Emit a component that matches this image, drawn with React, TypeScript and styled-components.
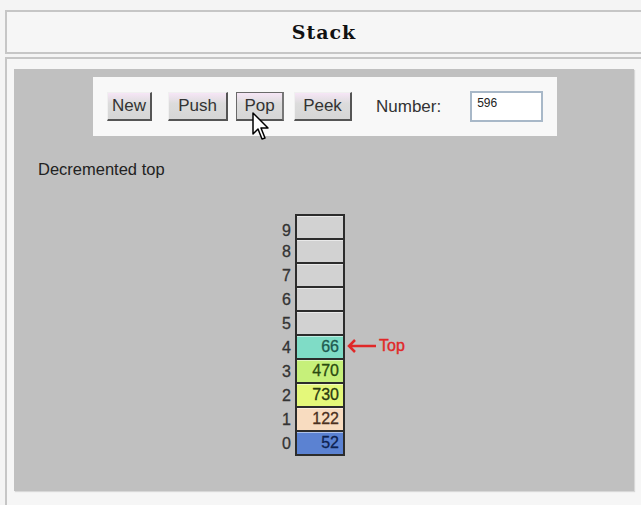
import styled, { createGlobalStyle } from 'styled-components'

const GlobalStyle = createGlobalStyle`
    html, body {
        margin: 0;
        padding: 0;
        background: #f4f4f4;
    }
    body {
        font-family: "Liberation Sans", Arial, sans-serif;
    }
`

const Page = styled.div`
    width: 641px;
    height: 505px;
    box-sizing: border-box;
    overflow: hidden;
    padding: 10px 0 0 5px;
`

const TitleBar = styled.div`
    height: 40px;
    border: 2px solid #c6c6c6;
    border-right: none;
    display: flex;
    align-items: center;
    justify-content: center;
    background: #f6f6f6;
`

const Title = styled.h1`
    margin: 0;
    font-family: "DejaVu Serif", "Liberation Serif", serif;
    font-size: 19px;
    font-weight: bold;
    letter-spacing: 1px;
    color: #111;
`

const MainPanel = styled.div`
    margin-top: 3px;
    border: 2px solid #c6c6c6;
    border-right: none;
    border-bottom: none;
    padding: 10px 0 0 7px;
    height: 446px;
    background: #f6f6f6;
`

const Canvas = styled.div`
    position: relative;
    width: 620px;
    height: 422px;
    padding-top: 8px;
    box-sizing: border-box;
    background: #c0c0c0;
    box-shadow: 1px 1px 1px #d8d8d8;
    display: flow-root;
`

const Toolbar = styled.div`
    margin-left: 79px;
    width: 464px;
    height: 59px;
    background: #f8f8f8;
    display: flex;
    align-items: center;
    padding-left: 14px;
    box-sizing: border-box;
`

const Button = styled.button<{ $pressed?: boolean, $width: number, $gap: number }>`
    width: ${({ $width }) => $width}px;
    height: 29px;
    margin-right: ${({ $gap }) => $gap}px;
    padding: 0;
    font-family: "Liberation Sans", Arial, sans-serif;
    font-size: 17px;
    color: #333;
    background: linear-gradient(#f6e6f6, #dcdcdc 40%, #d6d6d6);
    border: 2px solid;
    border-color: ${({ $pressed }) => ($pressed ? '#6a6a6a #777 #555 #6a6a6a' : '#f0f0f0 #555 #555 #f0f0f0')};
    border-top-width: 1px;
    border-left-width: 1px;
`

const Label = styled.span`
    margin-left: 14px;
    font-size: 17px;
    color: #333;
`

const NumberBox = styled.div`
    margin-left: 29px;
    width: 73px;
    height: 31px;
    box-sizing: border-box;
    border: 2px solid #a8b8c8;
    background: #fff;
    font-size: 12px;
    color: #222;
    padding: 3px 0 0 5px;
`

const Message = styled.p`
    margin: 24px 0 0 24px;
    font-size: 16.5px;
    color: #222;
`

const StackArea = styled.div`
    position: relative;
    margin: 35px 0 0 262px;
    width: 160px;
`

const Row = styled.div`
    display: flex;
    align-items: center;
    height: 24px;
    &:first-child {
        height: 26px;
        align-items: flex-end;
    }
`

const Index = styled.span`
    width: 15px;
    padding-right: 4px;
    text-align: right;
    font-size: 16px;
    color: #333;
    -webkit-text-stroke: 0.3px #333;
`

const Cell = styled.div<{ $fill: string, $ink: string, $first?: boolean }>`
    width: 50px;
    height: ${({ $first }) => ($first ? '26px' : '24px')};
    box-sizing: border-box;
    border: 2px solid #2c2c2c;
    border-top: ${({ $first }) => ($first ? '2px solid #2c2c2c' : 'none')};
    background: ${({ $fill }) => $fill};
    box-shadow: inset 0 1px 0 rgba(255, 255, 255, 0.5);
    text-align: right;
    padding-right: 4px;
    font-size: 16px;
    line-height: 22px;
    color: ${({ $ink }) => $ink};
    -webkit-text-stroke: 0.3px ${({ $ink }) => $ink};
`

const Pointer = styled.div`
    position: absolute;
    left: 71px;
    top: 123px;
    display: flex;
    align-items: center;
    gap: 2px;
    color: #e02828;
    font-size: 16px;
    -webkit-text-stroke: 0.4px #e02828;
`

const Cursor = styled.svg`
    position: absolute;
    left: 238px;
    top: 43px;
`

interface Slot {
    value?: number
    fill: string
    ink: string
}

const slots: Slot[] = [
  { fill: '#d2d2d2', ink: '#000' },
  { fill: '#d2d2d2', ink: '#000' },
  { fill: '#d2d2d2', ink: '#000' },
  { fill: '#d2d2d2', ink: '#000' },
  { fill: '#d2d2d2', ink: '#000' },
  { value: 66, fill: '#7fdcc6', ink: '#1e5a50' },
  { value: 470, fill: '#c6f07a', ink: '#2a4a10' },
  { value: 730, fill: '#e4f87a', ink: '#2a3a10' },
  { value: 122, fill: '#f8dcc0', ink: '#4a3020' },
  { value: 52, fill: '#5b82d2', ink: '#0e2250' }
]

const App = () => {
  return (
        <Page>
            <GlobalStyle />
            <TitleBar>
                <Title>Stack</Title>
            </TitleBar>
            <MainPanel>
                <Canvas>
                    <Toolbar>
                        <Button $width={45} $gap={16}>New</Button>
                        <Button $width={60} $gap={8}>Push</Button>
                        <Button $width={48} $gap={10} $pressed>Pop</Button>
                        <Button $width={58} $gap={10}>Peek</Button>
                        <Label>Number:</Label>
                        <NumberBox>596</NumberBox>
                    </Toolbar>
                    <Message>Decremented top</Message>
                    <StackArea>
                        {slots.map((slot, i) => (
                            <Row key={i}>
                                <Index>{9 - i}</Index>
                                <Cell $fill={slot.fill} $ink={slot.ink} $first={i === 0}>
                                    {slot.value}
                                </Cell>
                            </Row>
                        ))}
                        <Pointer>
                            <svg width="30" height="14" viewBox="0 0 30 14">
                                <path d="M2 7 H29 M8 1 L2 7 L8 13" fill="none" stroke="#e02828" strokeWidth="2.5" />
                            </svg>
                            Top
                        </Pointer>
                    </StackArea>
                    <Cursor width="20" height="30" viewBox="0 0 20 30">
                        <path d="M1 1 L1 22 L6 17 L10 27 L13 26 L9 16 L16 16 Z" fill="#fff" stroke="#000" strokeWidth="1.5" strokeLinejoin="round" />
                    </Cursor>
                </Canvas>
            </MainPanel>
        </Page>
  )
}

export default App
